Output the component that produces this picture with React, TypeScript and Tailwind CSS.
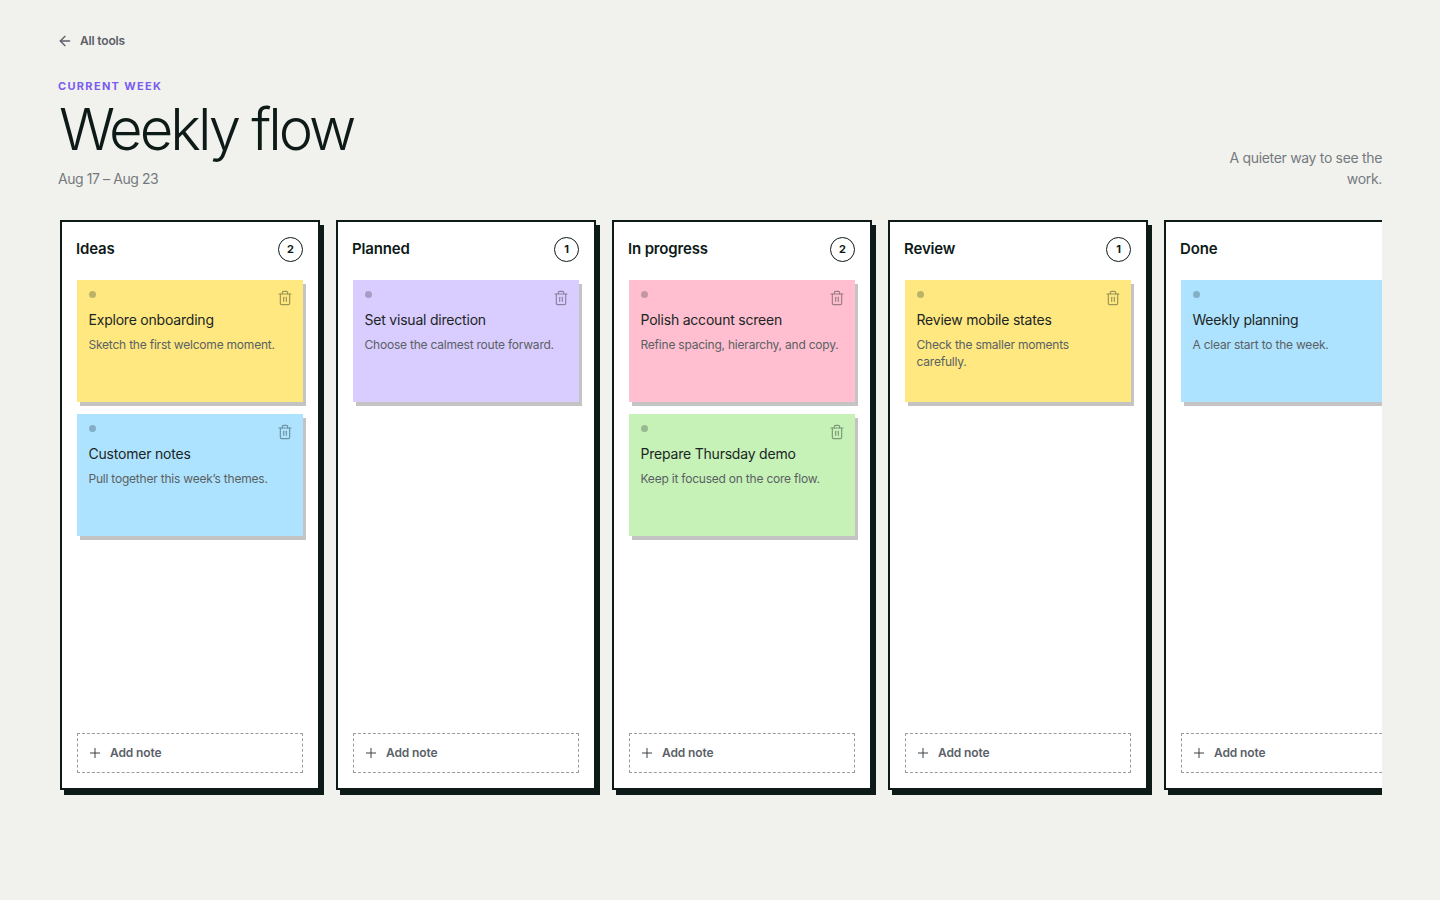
import { ArrowLeft, Plus, Trash2 } from "lucide-react";

type Note = { title: string; body: string; color: string; dot: string };
type Col = { name: string; notes: Note[] };

const yellow = { color: "bg-[#ffe880]", dot: "bg-[#bdb26a]" };
const blue = { color: "bg-[#aee3ff]", dot: "bg-[#84aec6]" };
const purple = { color: "bg-[#d9ccff]", dot: "bg-[#a69dc5]" };
const pink = { color: "bg-[#ffbfd0]", dot: "bg-[#c397a6]" };
const green = { color: "bg-[#c6f2b8]", dot: "bg-[#98ba90]" };

const cols: Col[] = [
  {
    name: "Ideas",
    notes: [
      { title: "Explore onboarding", body: "Sketch the first welcome moment.", ...yellow },
      { title: "Customer notes", body: "Pull together this week’s themes.", ...blue },
    ],
  },
  { name: "Planned", notes: [{ title: "Set visual direction", body: "Choose the calmest route forward.", ...purple }] },
  {
    name: "In progress",
    notes: [
      { title: "Polish account screen", body: "Refine spacing, hierarchy, and copy.", ...pink },
      { title: "Prepare Thursday demo", body: "Keep it focused on the core flow.", ...green },
    ],
  },
  { name: "Review", notes: [{ title: "Review mobile states", body: "Check the smaller moments carefully.", ...yellow }] },
  { name: "Done", notes: [{ title: "Weekly planning", body: "A clear start to the week.", ...blue }] },
];

function NoteCard({ note }: { note: Note }) {
  return (
    <div className={`relative h-[122px] shrink-0 pl-[11.5px] pr-3 pt-[11px] shadow-[3px_4px_0_#c4c4c4] ${note.color}`}>
      <div className={`ml-[0.5px] h-[7px] w-[7px] rounded-full ${note.dot}`} />
      <Trash2 className="absolute right-[10px] top-[10px] h-4 w-4 text-[#0d1a18] opacity-40" strokeWidth={1.75} />
      <div className="mt-[11px] text-[14px] leading-[22px] tracking-[-0.015em] text-[#1b2524]">{note.title}</div>
      <div className="mt-[5px] text-[12px] leading-[17px] tracking-[-0.018em] text-[#5a6163]">{note.body}</div>
    </div>
  );
}

function Column({ col }: { col: Col }) {
  return (
    <div className="flex h-[570px] w-[260px] shrink-0 flex-col border-2 border-[#0d1a18] bg-white px-[15px] pb-[15px] pt-[15px] shadow-[4px_5px_0_#0d1a18]">
      <div className="flex h-[25px] items-center justify-between">
        <span className="-ml-[1px] text-[15px] font-semibold tracking-[-0.01em] text-[#0d1a18]">{col.name}</span>
        <span className="flex h-[25px] w-[25px] items-center justify-center rounded-full border border-[#0d1a18] text-[11px] font-bold text-[#0d1a18]">
          {col.notes.length}
        </span>
      </div>
      <div className="mt-[18px] flex flex-1 flex-col gap-3">
        {col.notes.map((n) => (
          <NoteCard key={n.title} note={n} />
        ))}
      </div>
      <div className="flex h-10 items-center gap-[6px] border border-dashed border-[#9a9a9f] px-[9px] text-[12px] font-semibold tracking-[-0.01em] text-[#5a5f68]">
        <Plus className="h-4 w-4 text-[#3c4347]" strokeWidth={1.5} />
        <span className="ml-[1px]">Add note</span>
      </div>
    </div>
  );
}

export default function App() {
  return (
    <div className="min-h-[900px] bg-[#f1f2ed] px-[58px] pt-8 font-['Inter',sans-serif]">
      <div className="flex h-[18px] items-center gap-[7px] text-[12px] font-semibold tracking-[-0.015em] text-[#5a5f68]">
        <ArrowLeft className="-ml-[1px] h-4 w-4" strokeWidth={2} />
        <span>All tools</span>
      </div>
      <div className="mt-[28px] flex items-end justify-between">
        <div>
          <div className="text-[11px] font-bold leading-[16px] tracking-[0.12em] text-[#7a5cf0]">CURRENT WEEK</div>
          <h1 className="mt-[5px] pl-[1px] text-[58px] font-light leading-[60px] tracking-[-0.052em] text-[#0d1a18]">Weekly flow</h1>
          <div className="mt-[10px] text-[14px] leading-[20px] tracking-[-0.03em] text-[#767a80]">Aug 17 – Aug 23</div>
        </div>
        <div className="w-[170px] text-right text-[14px] leading-[21px] tracking-[-0.023em] text-[#767a80]">
          A quieter way to see the work.
        </div>
      </div>
      <div className="mt-[31px] flex gap-4 overflow-hidden pb-[10px] pl-[2px] pt-0">
        {cols.map((c) => (
          <Column key={c.name} col={c} />
        ))}
      </div>
    </div>
  );
}
